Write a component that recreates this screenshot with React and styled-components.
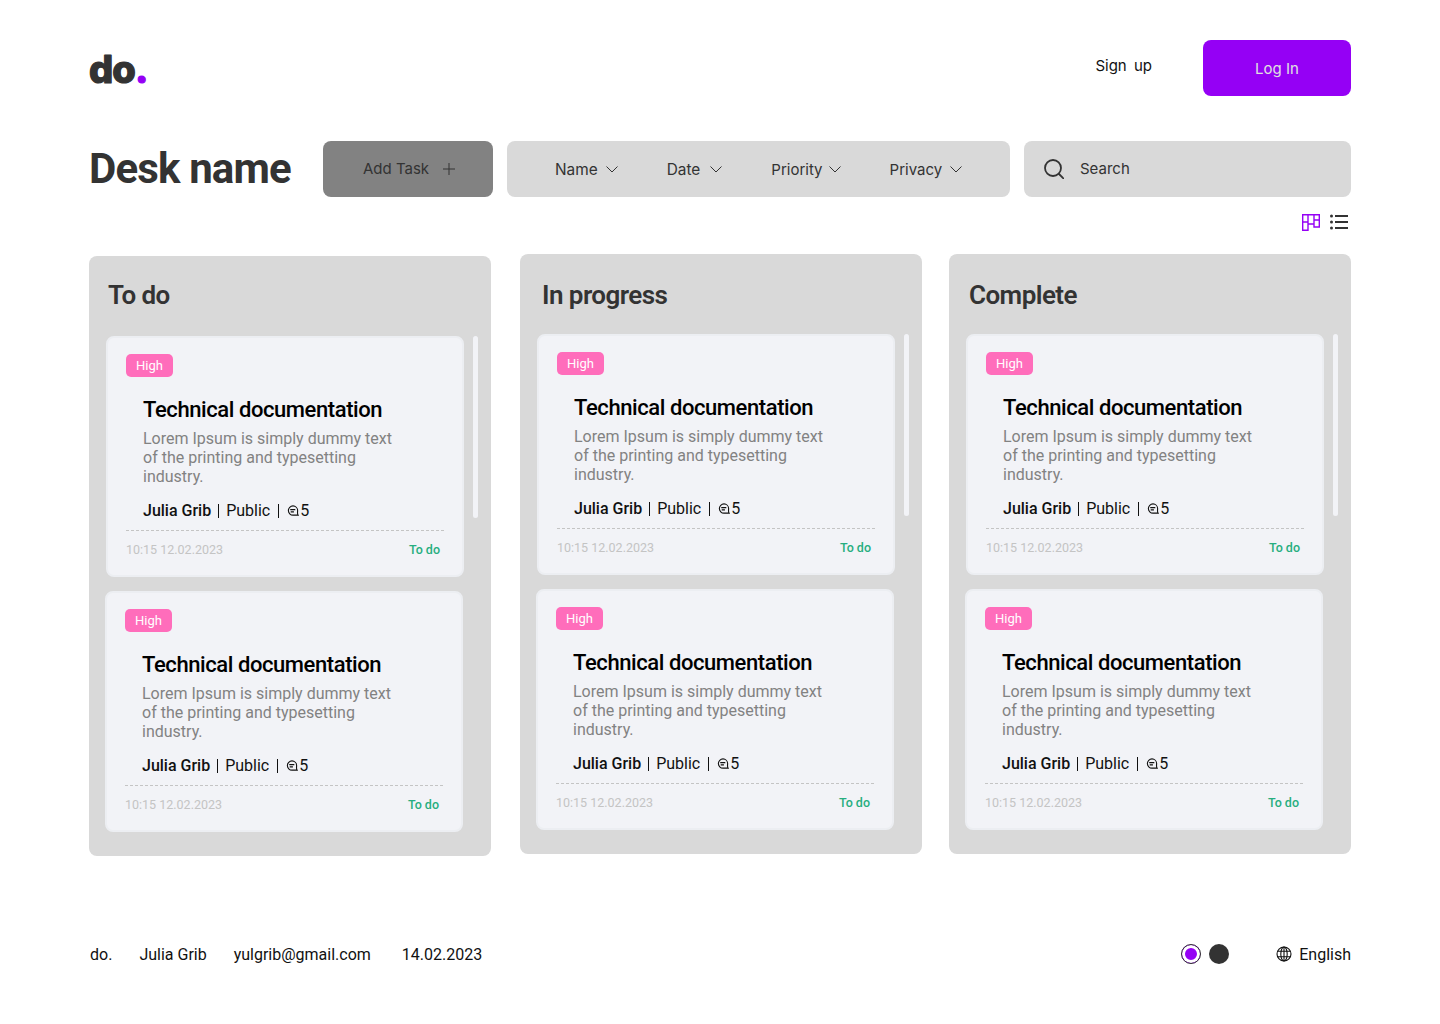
import React from "react";
import styled, { createGlobalStyle } from "styled-components";

const GlobalStyle = createGlobalStyle`
    * {
        box-sizing: border-box;
    }
    body {
        margin: 0;
        background: #ffffff;
        font-family: "Roboto", "Liberation Sans", sans-serif;
    }
`;

const Page = styled.div`
    width: 1440px;
    height: 1024px;
    padding: 40px 89px 0;
    overflow: hidden;
`;

const Header = styled.header`
    display: flex;
    align-items: center;
    height: 56px;
`;

const LogoMark = styled.svg`
    display: block;
    width: 60px;
    height: 40px;
    margin-top: 6px;
    overflow: visible;
`;

const LogoText = styled.text`
    font-family: "Inter", sans-serif;
    font-weight: 800;
    font-size: 38px;
    letter-spacing: -0.9px;
    fill: #333333;
    stroke: #333333;
    stroke-width: 1.2px;
    stroke-linejoin: round;

    tspan {
        fill: #9500f5;
        stroke: #9500f5;
    }
`;

const SignUp = styled.div`
    margin-left: auto;
    margin-right: 51px;
    margin-top: -6px;
    font-family: "Inter", sans-serif;
    font-size: 15px;
    color: #111111;
    word-spacing: 3px;
`;

const LogIn = styled.button`
    width: 148px;
    height: 56px;
    border: none;
    border-radius: 8px;
    background: #9500f5;
    color: #e0e0e0;
    font-family: "Inter", sans-serif;
    font-size: 15px;
`;

const Toolbar = styled.div`
    display: flex;
    gap: 14px;
    margin-top: 45px;
    height: 56px;
`;

const DeskName = styled.h1`
    width: 220px;
    margin: 0;
    font-size: 42px;
    font-weight: 700;
    line-height: 56px;
    letter-spacing: -0.85px;
    color: #333333;
    white-space: nowrap;
`;

const AddTask = styled.button`
    display: flex;
    align-items: center;
    justify-content: center;
    gap: 14px;
    width: 170px;
    padding: 0 0 1px 2px;
    border: none;
    border-radius: 8px;
    background: #828282;
    color: #333333;
    font-family: "Inter", sans-serif;
    font-size: 15px;
`;

const Filters = styled.div`
    display: flex;
    align-items: center;
    gap: 49px;
    width: 503px;
    padding-left: 48px;
    border-radius: 8px;
    background: #d9d9d9;
`;

const Filter = styled.div`
    display: flex;
    align-items: center;
    gap: ${(props) => props.$gap}px;
    font-family: "Inter", sans-serif;
    font-size: ${(props) => props.$size}px;
    color: #333333;
`;

const SearchBox = styled.div`
    display: flex;
    align-items: center;
    gap: 16px;
    width: 327px;
    padding: 0 0 1px 20px;
    border-radius: 8px;
    background: #d9d9d9;
    font-family: "Inter", sans-serif;
    font-size: 15px;
    color: #333333;
`;

const ViewToggle = styled.div`
    display: flex;
    justify-content: flex-end;
    align-items: center;
    gap: 10px;
    height: 18px;
    margin-top: 16px;
    padding-right: 3px;
`;

const Board = styled.div`
    display: grid;
    grid-template-columns: 431px 429px 402px;
    margin-top: 23px;
`;

const Column = styled.section`
    width: 402px;
    height: 600px;
    margin-top: ${(props) => props.$top}px;
    border-radius: 8px;
    background: #d9d9d9;
`;

const ColumnTitle = styled.h2`
    margin: 0;
    padding-left: ${(props) => props.$left}px;
    height: 80px;
    font-size: 26px;
    font-weight: 600;
    line-height: ${(props) => props.$line}px;
    letter-spacing: -0.55px;
    color: #333333;
`;

const ColumnBody = styled.div`
    display: flex;
    align-items: flex-start;
    gap: 9px;
    padding-left: 16px;
`;

const CardList = styled.div`
    display: flex;
    flex-direction: column;
    gap: 14px;
    width: 359px;
`;

const Card = styled.article`
    width: 358px;
    height: 241px;
    margin-left: ${(props) => props.$shift}px;
    padding: 18px 20px 0;
    border: 2px solid #eceef2;
    border-radius: 8px;
    background: #f2f3f7;
`;

const Scrollbar = styled.div`
    width: 5px;
    height: 182px;
    border-radius: 3px;
    background: #f2f3f7;
`;

const Badge = styled.div`
    width: 47px;
    height: 23px;
    margin: -2px 0 0 -2px;
    border-radius: 5px;
    background: #ff6dbb;
    color: #ffffff;
    font-size: 13px;
    line-height: 24px;
    text-align: center;
`;

const CardBody = styled.div`
    padding-left: 17px;
    margin-left: -2px;
`;

const CardTitle = styled.h3`
    margin: 20px 0 0;
    font-size: 22px;
    font-weight: 500;
    line-height: 26px;
    letter-spacing: -0.42px;
    color: #000000;
`;

const CardText = styled.p`
    margin: 6px 0 0;
    width: 255px;
    font-size: 16px;
    line-height: 19px;
    color: #828282;
`;

const Meta = styled.div`
    display: flex;
    align-items: center;
    margin-top: 15px;
    font-size: 16px;
    line-height: 19px;
    color: #111111;
`;

const Author = styled.span`
    font-weight: 500;
`;

const Divider = styled.span`
    width: 1px;
    height: 14px;
    margin: 0 ${(props) => props.$right}px 0 ${(props) => props.$left}px;
    background: #111111;
`;

const CommentMark = styled.svg`
    display: block;
    width: 12px;
    height: 12px;
    margin-right: 1px;
`;

const CardFooter = styled.div`
    display: flex;
    justify-content: space-between;
    align-items: center;
    margin: 10px -2px 0 -2px;
    padding: 12px 4px 0 0;
    border-top: 1px dashed #c4c4c4;
    font-size: 12.5px;
    line-height: 14px;
`;

const Time = styled.span`
    color: #c4c4c4;
`;

const Status = styled.span`
    font-weight: 500;
    color: #27ae7f;
`;

const Footer = styled.footer`
    display: flex;
    align-items: center;
    margin-top: 88px;
    height: 20px;
    font-size: 16px;
    color: #111111;
`;

const FooterText = styled.span`
    margin-left: ${(props) => props.$left}px;
`;

const Swatches = styled.div`
    display: flex;
    align-items: center;
    gap: 8px;
    margin-left: auto;
    margin-right: 47px;
`;

const Swatch = styled.div`
    width: 20px;
    height: 20px;
    border-radius: 50%;
    background: ${(props) => props.$color};
    border: ${(props) => (props.$active ? "1px solid #333333" : "none")};
    box-shadow: ${(props) => (props.$active ? "inset 0 0 0 3px #ffffff" : "none")};
`;

const Language = styled.div`
    display: flex;
    align-items: center;
    gap: 7px;
`;

const Chevron = () => (
    <svg width="12" height="7" viewBox="0 0 12 7" fill="none">
        <path d="M0.5 0.5L6 6L11.5 0.5" stroke="#333333" />
    </svg>
);

const Plus = () => (
    <svg width="12" height="14" viewBox="0 0 12 14" fill="none">
        <path d="M6 1V13M0 7H12" stroke="#333333" />
    </svg>
);

const SearchIcon = () => (
    <svg width="20" height="20" viewBox="0 0 20 20" fill="none">
        <circle cx="9" cy="9" r="8" stroke="#333333" strokeWidth="1.8" />
        <path d="M15 15L19.5 19.5" stroke="#333333" strokeWidth="1.8" strokeLinecap="round" />
    </svg>
);

const BoardIcon = () => (
    <svg width="18" height="17" viewBox="0 0 18 17" fill="none">
        <path
            d="M0.7 0.7H17.3V13H12V10H6V16.3H0.7V0.7ZM6 0.7V10M12 0.7V13M0.7 8H6M12 6H17.3"
            stroke="#9500f5"
            strokeWidth="1.4"
        />
    </svg>
);

const ListIcon = () => (
    <svg width="18" height="16" viewBox="0 0 18 16" fill="none">
        <circle cx="1.5" cy="2" r="1.5" fill="#333333" />
        <circle cx="1.5" cy="8" r="1.5" fill="#333333" />
        <circle cx="1.5" cy="14" r="1.5" fill="#333333" />
        <path d="M5 2H18M5 8H18M5 14H18" stroke="#333333" strokeWidth="1.8" />
    </svg>
);

const CommentIcon = () => (
    <CommentMark viewBox="0 0 13 12" fill="none">
        <path d="M12 10.5H6.5A5 5 0 1 1 11.5 5.5C11.5 7.5 11 9 12 10.5Z" stroke="#111111" strokeWidth="1.2" />
        <path d="M3.5 4.5H9M4 7H7.5" stroke="#111111" strokeWidth="1.2" />
    </CommentMark>
);

const GlobeIcon = () => (
    <svg width="16" height="16" viewBox="0 0 16 16" fill="none" stroke="#111111" strokeWidth="1.1">
        <circle cx="8" cy="8" r="7" />
        <ellipse cx="8" cy="8" rx="3.2" ry="7" />
        <path d="M8 1V15M1.7 5.2H14.3M1.7 10.8H14.3" />
    </svg>
);

const TaskCard = ({ shift }) => (
    <Card $shift={shift}>
        <Badge>High</Badge>
        <CardBody>
            <CardTitle>Technical documentation</CardTitle>
            <CardText>
                Lorem Ipsum is simply dummy text of the printing and typesetting
                industry.
            </CardText>
            <Meta>
                <Author>Julia Grib</Author>
                <Divider $left={7} $right={7} />
                Public
                <Divider $left={8} $right={8} />
                <CommentIcon />
                5
            </Meta>
        </CardBody>
        <CardFooter>
            <Time>10:15 12.02.2023</Time>
            <Status>To do</Status>
        </CardFooter>
    </Card>
);

const columns = [
    { title: "To do", top: 2, left: 19, line: 78 },
    { title: "In progress", top: 0, left: 22, line: 82 },
    { title: "Complete", top: 0, left: 20, line: 82 },
];

const filters = [
    { name: "Name", gap: 8, size: 15.4 },
    { name: "Date", gap: 10, size: 15.4 },
    { name: "Priority", gap: 6, size: 15 },
    { name: "Privacy", gap: 8, size: 15 },
];

export default function App() {
    return (
        <Page>
            <GlobalStyle />
            <Header>
                <LogoMark viewBox="0 0 60 40">
                    <LogoText x="0" y="32">
                        do<tspan>.</tspan>
                    </LogoText>
                </LogoMark>
                <SignUp>Sign up</SignUp>
                <LogIn>Log In</LogIn>
            </Header>
            <Toolbar>
                <DeskName>Desk name</DeskName>
                <AddTask>
                    Add Task
                    <Plus />
                </AddTask>
                <Filters>
                    {filters.map((filter) => (
                        <Filter key={filter.name} $gap={filter.gap} $size={filter.size}>
                            {filter.name}
                            <Chevron />
                        </Filter>
                    ))}
                </Filters>
                <SearchBox>
                    <SearchIcon />
                    Search
                </SearchBox>
            </Toolbar>
            <ViewToggle>
                <BoardIcon />
                <ListIcon />
            </ViewToggle>
            <Board>
                {columns.map((column) => (
                    <Column key={column.title} $top={column.top}>
                        <ColumnTitle $left={column.left} $line={column.line}>
                            {column.title}
                        </ColumnTitle>
                        <ColumnBody>
                            <CardList>
                                <TaskCard shift={1} />
                                <TaskCard shift={0} />
                            </CardList>
                            <Scrollbar />
                        </ColumnBody>
                    </Column>
                ))}
            </Board>
            <Footer>
                <FooterText $left={1}>do.</FooterText>
                <FooterText $left={27}>Julia Grib</FooterText>
                <FooterText $left={27}>yulgrib@gmail.com</FooterText>
                <FooterText $left={31}>14.02.2023</FooterText>
                <Swatches>
                    <Swatch $active $color="#9500f5" />
                    <Swatch $color="#333333" />
                </Swatches>
                <Language>
                    <GlobeIcon />
                    English
                </Language>
            </Footer>
        </Page>
    );
}
